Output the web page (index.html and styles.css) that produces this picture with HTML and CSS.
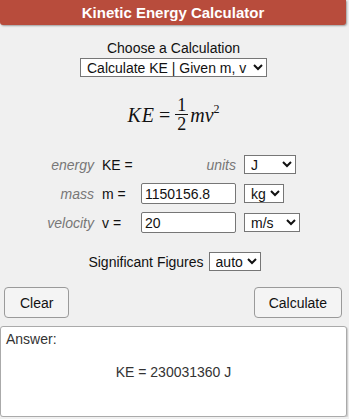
FILE: index.html
```html
<!DOCTYPE html>
<html lang="en">
<head>
<meta charset="UTF-8">
<meta name="viewport" content="width=device-width, initial-scale=1.0">
<title>Kinetic Energy Calculator</title>
<link rel="stylesheet" href="styles.css">
</head>
<body>
    <div class="calc">
        <div class="calc-title">Kinetic Energy Calculator</div>

        <div class="choose">
            <label for="calcType">Choose a Calculation</label>
            <select id="calcType" class="calc-type">
                <option>Calculate KE | Given m, v</option>
                <option>Calculate m | Given KE, v</option>
                <option>Calculate v | Given KE, m</option>
            </select>
        </div>

        <div class="formula">
            <span class="var ke">KE</span>
            <span class="eq">=</span>
            <span class="frac">
                <span class="num">1</span>
                <span class="den">2</span>
            </span>
            <span class="var">mv<sup>2</sup></span>
        </div>

        <div class="fields">
            <span class="name">energy</span>
            <span class="sym">KE =</span>
            <span class="name">units</span>
            <select class="unit unit-j">
                <option>J</option>
                <option>kJ</option>
                <option>MJ</option>
            </select>

            <span class="name">mass</span>
            <span class="sym">m =</span>
            <input type="text" class="val" value="1150156.8">
            <select class="unit">
                <option>kg</option>
                <option>g</option>
                <option>lb</option>
            </select>

            <span class="name">velocity</span>
            <span class="sym">v =</span>
            <input type="text" class="val" value="20">
            <select class="unit unit-ms">
                <option>m/s</option>
                <option>km/h</option>
                <option>mph</option>
            </select>
        </div>

        <div class="sigfig">
            <label for="sig">Significant Figures</label>
            <select id="sig">
                <option>auto</option>
                <option>3</option>
                <option>4</option>
                <option>5</option>
            </select>
        </div>

        <div class="actions">
            <button type="button" class="btn">Clear</button>
            <button type="button" class="btn btn-calc">Calculate</button>
        </div>

        <div class="answer">
            <div class="answer-label">Answer:</div>
            <div class="answer-value">KE = 230031360 J</div>
        </div>
    </div>
</body>
</html>
```

FILE: styles.css
```css
body {
    margin: 0;
    background-color: #f0f0f0;
    font-family: 'Liberation Sans', Arial, sans-serif;
    font-size: 14px;
    color: #111;
}

.calc {
    width: 347px;
}

.calc-title {
    width: 346px;
    height: 25px;
    line-height: 25px;
    background-color: #b84c3c;
    color: #fff;
    font-weight: bold;
    font-size: 15px;
    text-align: center;
    border-radius: 0 0 3px 3px;
    box-shadow: 1px 1px 2px rgba(0, 0, 0, 0.35);
}

select,
input,
button {
    font-family: 'Liberation Sans', Arial, sans-serif;
    font-size: 14px;
}

select {
    height: 19px;
    padding: 0 0 0 2px;
    border: 1px solid #767676;
    border-radius: 0;
    background-color: #fff;
    color: #111;
}

.choose {
    margin-top: 15px;
    text-align: center;
}

.choose label {
    display: block;
    line-height: 16px;
    margin-bottom: 2px;
}

.calc-type {
    width: 187px;
}

/* the KE = 1/2 mv^2 line */
.formula {
    display: flex;
    justify-content: center;
    align-items: center;
    height: 40px;
    margin-top: 18px;
    font-family: 'Liberation Serif', 'Times New Roman', serif;
    font-size: 20px;
    color: #111;
}

.var {
    font-style: italic;
}

.ke {
    letter-spacing: 1px;
}

.var sup {
    font-size: 12px;
    font-style: normal;
    vertical-align: 9px;
    line-height: 0;
}

.eq {
    margin: 0 5px 0 4px;
}

.frac {
    display: inline-flex;
    flex-direction: column;
    align-items: center;
    font-size: 18px;
    line-height: 17px;
    margin-right: 2px;
}

.num {
    padding: 0 2px;
    border-bottom: 1px solid #111;
    margin-bottom: 1px;
}

.fields {
    display: grid;
    grid-template-columns: 94px 31px 95px auto;
    grid-auto-rows: 21px;
    column-gap: 8px;
    row-gap: 8px;
    align-items: center;
    margin-top: 19px;
}

.name {
    text-align: right;
    font-style: italic;
    color: #777;
}

.sym {
    color: #111;
}

.val {
    box-sizing: border-box;
    width: 95px;
    height: 21px;
    padding: 0 3px;
    border: 1px solid #767676;
    border-radius: 2px;
    color: #111;
}

.unit {
    justify-self: start;
    width: 40px;
}

.unit-j {
    width: 52px;
}

.unit-ms {
    width: 56px;
}

.sigfig {
    display: flex;
    justify-content: center;
    align-items: center;
    gap: 5px;
    margin-top: 19px;
    margin-left: 2px;
}

.sigfig select {
    width: 52px;
}

.actions {
    display: flex;
    justify-content: space-between;
    margin-top: 16px;
    padding: 0 5px 0 4px;
}

.btn {
    height: 31px;
    padding: 0 15px;
    background-color: #f4f4f4;
    border: 1px solid #9a9a9a;
    border-radius: 4px;
    color: #111;
}

.btn-calc {
    padding: 0 14px;
}

.answer {
    box-sizing: border-box;
    width: 347px;
    height: 91px;
    margin-top: 8px;
    padding: 4px 5px;
    background-color: #fff;
    border: 1px solid #aaa;
    border-radius: 3px;
    box-shadow: 1px 1px 1px rgba(0, 0, 0, 0.15);
    color: #333;
}

.answer-label {
    line-height: 16px;
}

.answer-value {
    margin-top: 17px;
    text-align: center;
}
```
